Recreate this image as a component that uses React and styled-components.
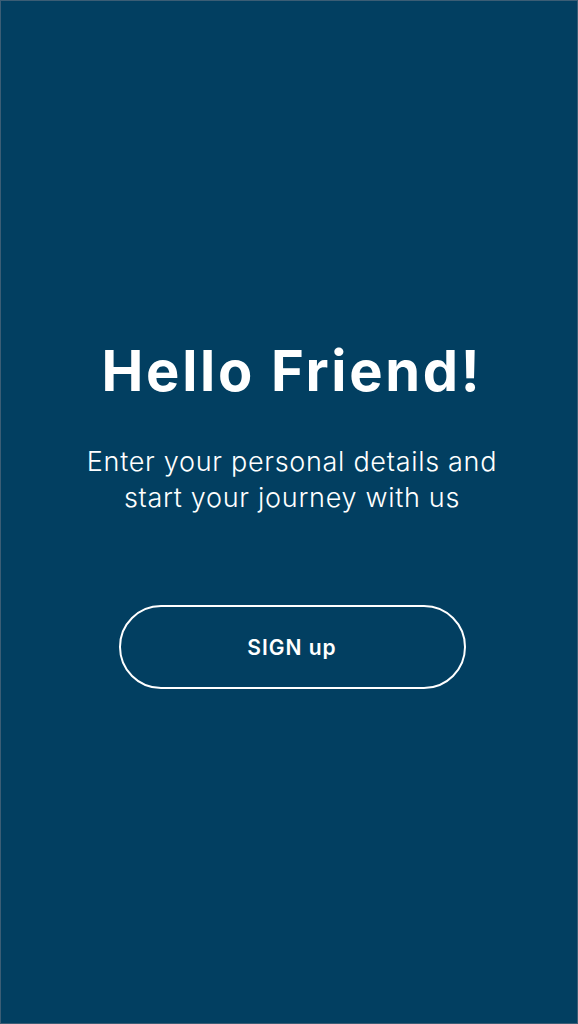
import React from "react";
import styled, { createGlobalStyle } from "styled-components";

const Global = createGlobalStyle`
  html, body { margin: 0; padding: 0; background: #023f61; }
  * { box-sizing: border-box; }
`;

const Screen = styled.div`
  width: 578px;
  height: 1024px;
  background: #023f61;
  border: 1px solid #3b5d75;
  display: flex;
  flex-direction: column;
  align-items: center;
  padding: 338px 0 0 6px;
  font-family: Inter, "Open Sans", sans-serif;
  color: #ffffff;
`;

const Title = styled.h1`
  margin: 0;
  font-size: 56px;
  font-weight: 700;
  line-height: 64px;
  letter-spacing: 2.7px;
`;

const Subtitle = styled.p`
  margin: 41px 0 0;
  font-size: 27px;
  font-weight: 300;
  line-height: 36px;
  text-align: center;
  letter-spacing: 0.7px;
`;

const GhostButton = styled.button`
  margin-top: 89px;
  width: 347px;
  height: 84px;
  border: 2px solid #ffffff;
  border-radius: 42px;
  background: transparent;
  color: #ffffff;
  font-family: inherit;
  font-size: 21px;
  font-weight: 600;
  letter-spacing: 1px;
  cursor: pointer;
`;

export default function App() {
  return (
    <>
      <Global />
      <Screen>
        <Title>Hello Friend!</Title>
        <Subtitle>
          Enter your personal details and
          <br />
          start your journey with us
        </Subtitle>
        <GhostButton>SIGN up</GhostButton>
      </Screen>
    </>
  );
}
